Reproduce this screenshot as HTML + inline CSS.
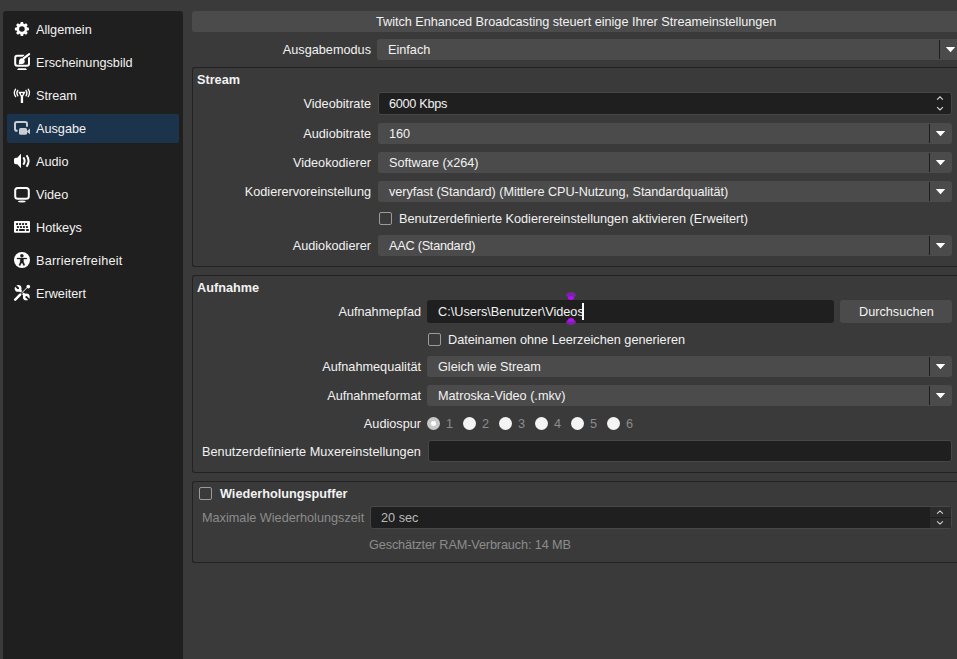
<!DOCTYPE html>
<html><head><meta charset="utf-8">
<style>
html,body{margin:0;padding:0;width:957px;height:659px;overflow:hidden;background:#3a3a3a;}
body{position:relative;font-family:"Liberation Sans",sans-serif;font-size:12.7px;color:#f2f2f2;}
.a{position:absolute;}
.t{position:absolute;white-space:nowrap;line-height:13px;margin-top:1px;}
.r{text-align:right;}
.side{left:3px;top:11px;width:180px;height:660px;background:#1f1f1f;border-radius:3px;}
.sel{left:7px;top:114px;width:172px;height:29px;background:#1b334b;border-radius:2px;}
.combo{background:#4b4b4b;border-radius:3px;height:21px;}
.combo .sep{position:absolute;top:1px;bottom:1px;width:1px;background:#1e1e1e;}
.combo .arr{position:absolute;width:0;height:0;border-left:5px solid transparent;border-right:5px solid transparent;border-top:5.5px solid #fff;}
.edit{background:#1f1f1f;border-radius:3px;}
.group{border:1px solid #222;border-radius:3px;border-right:none;}
.cb{width:11px;height:11px;border:1px solid #9b9b9b;border-radius:2px;}
.rad{width:13px;height:13px;border-radius:50%;background:#f4f4f4;}
.dis{color:#8c8c8c;}
b,.b{font-weight:bold;}
</style></head><body>
<!-- sidebar -->
<div class="a side"></div>
<div class="a sel"></div>
<svg class="a" style="left:0;top:0" width="183" height="320" viewBox="0 0 183 320">
<g fill="#fff">
<!-- gear -->
<path fill-rule="evenodd" d="M20.20,24.09 L20.73,22.00 L23.07,22.00 L23.60,24.09 L24.17,24.32 L26.02,23.22 L27.68,24.88 L26.58,26.73 L26.81,27.30 L28.90,27.83 L28.90,30.17 L26.81,30.70 L26.58,31.27 L27.68,33.12 L26.02,34.78 L24.17,33.68 L23.60,33.91 L23.07,36.00 L20.73,36.00 L20.20,33.91 L19.63,33.68 L17.78,34.78 L16.12,33.12 L17.22,31.27 L16.99,30.70 L14.90,30.17 L14.90,27.83 L16.99,27.30 L17.22,26.73 L16.12,24.88 L17.78,23.22 L19.63,24.32Z M24.7,29 A2.8,2.8 0 1 0 19.1,29 A2.8,2.8 0 1 0 24.7,29Z"/>
<!-- appearance -->
<path fill="none" stroke="#fff" stroke-width="2" d="M24.3,55.7 L17.2,55.7 Q15.2,55.7 15.2,57.7 L15.2,63.7 Q15.2,65.7 17.2,65.7 L27,65.7 Q29,65.7 29,63.7 L29,57.2"/>
<path d="M17,70 L18.2,68.2 L25.8,68.2 L27,70Z"/>
<path stroke="#1f1f1f" stroke-width="3.8" d="M23.2,58.8 L30.2,53.2"/><path stroke="#fff" stroke-width="2.1" stroke-linecap="round" d="M23.6,58.4 L29.2,54.1"/>
<path d="M18.8,64.2 L19.1,60.5 A2.9,2.9 0 1 1 22.2,64.1Z"/>
<!-- antenna -->
<path fill="none" stroke="#fff" stroke-width="1.3" stroke-linecap="round" d="M15.6,89.2 A6.5,6.5 0 0 0 15.6,96.6 M17.8,90.4 A4.6,4.6 0 0 0 17.8,95.8 M28.2,89.2 A6.5,6.5 0 0 1 28.2,96.6 M26,90.4 A4.6,4.6 0 0 1 26,95.8"/>
<path fill-rule="evenodd" d="M18.3,91.7 L25.6,91.7 L23.1,96.5 L23.1,103 L20.8,103 L20.8,96.5Z M22.9,93.9 A1,1 0 1 0 20.9,93.9 A1,1 0 1 0 22.9,93.9Z"/>
<!-- audio -->
<path d="M14,159.4 Q14,157.7 15.8,157.7 L17.3,157.7 L21,153.8 L21,168.2 L17.3,164.3 L15.8,164.3 Q14,164.3 14,162.6Z"/>
<path fill="none" stroke="#fff" stroke-width="2" d="M23.3,157.4 Q26,161 23.3,164.6 M26.6,155.3 Q30.6,161 26.6,166.7"/>
<!-- video -->
<rect x="15.2" y="188" width="13.6" height="10.8" rx="2.6" fill="none" stroke="#fff" stroke-width="2"/>
<ellipse cx="21.9" cy="201.5" rx="3.8" ry="0.9"/>
<!-- hotkeys -->
<rect x="14" y="221" width="16" height="11.8" rx="1"/>
<g fill="#1f1f1f">
<rect x="16.05" y="223.05" width="2.00" height="1.90" rx="0.4"/><rect x="19.05" y="223.05" width="2.00" height="1.90" rx="0.4"/><rect x="22.05" y="223.05" width="2.00" height="1.90" rx="0.4"/><rect x="25.05" y="223.05" width="2.00" height="1.90" rx="0.4"/>
<rect x="16.95" y="226.05" width="2.00" height="1.90" rx="0.4"/><rect x="19.95" y="226.05" width="2.00" height="1.90" rx="0.4"/><rect x="22.95" y="226.05" width="2.00" height="1.90" rx="0.4"/><rect x="25.95" y="226.05" width="2.00" height="1.90" rx="0.4"/>
<rect x="16.05" y="229.05" width="2.00" height="1.90" rx="0.4"/><rect x="19.05" y="229.05" width="5.80" height="1.90" rx="0.4"/><rect x="26.05" y="229.05" width="2.80" height="1.90" rx="0.4"/>
</g>
<!-- accessibility -->
<circle cx="22" cy="260" r="8"/>
<g fill="#1f1f1f">
<circle cx="21.9" cy="255.8" r="1.75"/>
<path stroke="#1f1f1f" stroke-width="0.3" stroke-linejoin="round" d="M17,258 L26.8,258 L26.8,259.1 L23.6,259.1 L23.6,262 L24.9,265.1 L23.7,265.7 L22.3,262.9 L21.5,262.9 L20.1,265.7 L18.9,265.1 L20.2,262 L20.2,259.1 L17,259.1Z"/>
</g>
<!-- tools -->
<path stroke="#fff" stroke-width="2.4" d="M18.4,288.6 L26,296.6"/>
<circle cx="18.1" cy="288.4" r="3.4"/><circle cx="26.3" cy="296.9" r="3.4"/>
<g fill="#1f1f1f"><path d="M18.76,287.62 L15.58,284.43 L14.23,285.78 L17.42,288.96Z"/><circle cx="18.09" cy="288.29" r="0.95"/><path d="M25.64,297.58 L28.82,300.77 L30.17,299.42 L26.98,296.24Z"/><circle cx="26.31" cy="296.91" r="0.95"/></g>
<path stroke="#1f1f1f" stroke-width="2.1" d="M20.2,294.5 L27.4,287.3"/>
<path stroke="#fff" stroke-width="0.95" d="M20.2,294.5 L27.4,287.3"/>
<path stroke="#1f1f1f" stroke-width="3.8" stroke-linecap="round" d="M15.2,299.6 L20.2,294.6"/>
<path stroke="#fff" stroke-width="2.5" stroke-linecap="round" d="M15.2,299.6 L20.2,294.6"/>
<circle cx="28.3" cy="286.6" r="1.85"/>
</g>
<!-- ausgabe (selected) -->
<g fill="#c9ced5">
<path fill="none" stroke="#c9ced5" stroke-width="2" d="M17.6,130.7 L16.8,130.7 Q15,130.7 15,128.9 L15,123.8 Q15,122 16.8,122 L25.2,122 Q27,122 27,123.8 L27,126.8"/>
<rect x="18" y="127" width="10" height="8.8" rx="2" fill="#1b334b"/><rect x="19" y="128" width="8" height="6.8" rx="1.6"/>
<path d="M26.4,131.4 L30,128.5 L30,134.3Z"/>
</g>
</svg>
<div class="t" style="left:36px;top:23px">Allgemein</div>
<div class="t" style="left:36px;top:56px">Erscheinungsbild</div>
<div class="t" style="left:36px;top:89px">Stream</div>
<div class="t" style="left:36px;top:122px">Ausgabe</div>
<div class="t" style="left:36px;top:155px">Audio</div>
<div class="t" style="left:36px;top:188px">Video</div>
<div class="t" style="left:36px;top:221px">Hotkeys</div>
<div class="t" style="left:36px;top:254px;letter-spacing:0.2px">Barrierefreiheit</div>
<div class="t" style="left:36px;top:287px">Erweitert</div>

<!-- banner -->
<div class="a" style="left:192px;top:11px;width:770px;height:21px;background:#4b4b4b;border-radius:3px"></div>
<div class="t" style="left:376px;top:15px;letter-spacing:-0.035px">Twitch Enhanced Broadcasting steuert einige Ihrer Streameinstellungen</div>

<!-- Ausgabemodus -->
<div class="t r" style="right:586px;top:43px">Ausgabemodus</div>
<div class="a combo" style="left:377px;top:39px;width:585px"><div class="sep" style="left:562px"></div></div>
<div class="t" style="left:388px;top:43px">Einfach</div>

<!-- Stream group -->
<div class="a group" style="left:192px;top:67px;width:800px;height:198px"></div>
<div class="t b" style="left:197px;top:73px">Stream</div>

<div class="t r" style="right:586px;top:97px">Videobitrate</div>
<div class="a edit" style="left:378px;top:92px;width:572px;height:21px;border:1px solid #474747"></div>
<div class="t" style="left:389px;top:97px;letter-spacing:-0.3px">6000 Kbps</div>

<div class="t r" style="right:586px;top:127px">Audiobitrate</div>
<div class="a combo" style="left:378px;top:123px;width:574px"><div class="sep" style="left:551px"></div></div>
<div class="t" style="left:389px;top:127px">160</div>

<div class="t r" style="right:586px;top:156px">Videokodierer</div>
<div class="a combo" style="left:378px;top:152px;width:574px"><div class="sep" style="left:551px"></div></div>
<div class="t" style="left:389px;top:156px">Software (x264)</div>

<div class="t r" style="right:586px;top:185px">Kodierervoreinstellung</div>
<div class="a combo" style="left:378px;top:181px;width:574px"><div class="sep" style="left:551px"></div></div>
<div class="t" style="left:389px;top:185px;letter-spacing:-0.06px">veryfast (Standard) (Mittlere CPU-Nutzung, Standardqualität)</div>

<div class="a cb" style="left:379px;top:212px"></div>
<div class="t" style="left:399px;top:212px">Benutzerdefinierte Kodierereinstellungen aktivieren (Erweitert)</div>

<div class="t r" style="right:586px;top:239px">Audiokodierer</div>
<div class="a combo" style="left:378px;top:235px;width:574px"><div class="sep" style="left:551px"></div></div>
<div class="t" style="left:389px;top:239px;letter-spacing:-0.24px">AAC (Standard)</div>

<!-- Aufnahme group -->
<div class="a group" style="left:192px;top:275px;width:800px;height:196px"></div>
<div class="t b" style="left:197px;top:281px">Aufnahme</div>

<div class="t r" style="right:536px;top:305px">Aufnahmepfad</div>
<div class="a edit" style="left:427px;top:300px;width:407px;height:23px"></div>
<div class="t" style="left:438px;top:305px">C:\Users\Benutzer\Videos</div>
<div class="a" style="left:582px;top:303px;width:2px;height:17px;background:#fff"></div>
<div class="a" style="left:566px;top:292px;width:10px;height:6px;border-radius:50%;background:#7b22a6"></div>
<div class="a" style="left:568px;top:295.5px;width:6px;height:4px;border-radius:50% 50% 45% 45%;background:#b010f0"></div>
<div class="a" style="left:566px;top:319px;width:10px;height:6px;border-radius:50%;background:#7b22a6"></div>
<div class="a" style="left:568px;top:318px;width:6px;height:4px;border-radius:45% 45% 50% 50%;background:#b010f0"></div>
<div class="a" style="left:840px;top:300px;width:112px;height:23px;background:#4b4b4b;border-radius:3px"></div>
<div class="t" style="left:859px;top:305px">Durchsuchen</div>

<div class="a cb" style="left:428px;top:333px"></div>
<div class="t" style="left:448px;top:333px">Dateinamen ohne Leerzeichen generieren</div>

<div class="t r" style="right:536px;top:360px">Aufnahmequalität</div>
<div class="a combo" style="left:427px;top:356px;width:525px"><div class="sep" style="left:502px"></div></div>
<div class="t" style="left:438px;top:360px">Gleich wie Stream</div>

<div class="t r" style="right:536px;top:389px">Aufnahmeformat</div>
<div class="a combo" style="left:427px;top:385px;width:525px"><div class="sep" style="left:502px"></div></div>
<div class="t" style="left:438px;top:389px">Matroska-Video (.mkv)</div>

<div class="t r" style="right:536px;top:417px">Audiospur</div>
<div class="a rad" style="left:427px;top:417px;background:#c8c8c8"></div>
<div class="a" style="left:431px;top:421px;width:5px;height:5px;border-radius:50%;background:#fff"></div>
<div class="t dis" style="left:446px;top:417px">1</div>
<div class="a rad" style="left:463px;top:417px"></div><div class="t dis" style="left:482px;top:417px">2</div>
<div class="a rad" style="left:499px;top:417px"></div><div class="t dis" style="left:518px;top:417px">3</div>
<div class="a rad" style="left:535px;top:417px"></div><div class="t dis" style="left:554px;top:417px">4</div>
<div class="a rad" style="left:571px;top:417px"></div><div class="t dis" style="left:590px;top:417px">5</div>
<div class="a rad" style="left:607px;top:417px"></div><div class="t dis" style="left:626px;top:417px">6</div>

<div class="t r" style="right:536px;top:445px;letter-spacing:0.07px">Benutzerdefinierte Muxereinstellungen</div>
<div class="a edit" style="left:428px;top:440px;width:522px;height:20px;border:1px solid #474747"></div>

<!-- Replay buffer group -->
<div class="a group" style="left:192px;top:481px;width:800px;height:80px"></div>
<div class="a cb" style="left:199px;top:487px"></div>
<div class="t b" style="left:220px;top:487px">Wiederholungspuffer</div>
<div class="t dis" style="left:202px;top:511px">Maximale Wiederholungszeit</div>
<div class="a edit" style="left:370px;top:506px;width:580px;height:21px;border:1px solid #474747"></div>
<div class="a" style="left:930px;top:507px;width:21px;height:10px;background:#2c2c2c"></div><div class="a" style="left:930px;top:517px;width:21px;height:1px;background:#1f1f1f"></div><div class="a" style="left:930px;top:518px;width:21px;height:10px;background:#2c2c2c"></div>
<div class="t" style="left:381px;top:511px;color:#b9b9b9">20 sec</div>
<div class="t dis" style="left:369px;top:538px;letter-spacing:-0.13px">Geschätzter RAM-Verbrauch: 14 MB</div>
<svg class="a" style="left:0;top:0;pointer-events:none" width="957" height="659"><g fill="#fff"><path d="M945.8,46.9 L955.2,46.9 L950.5,52.3Z"/><path d="M935.8,130.9 L945.2,130.9 L940.5,136.3Z"/><path d="M935.8,159.9 L945.2,159.9 L940.5,165.3Z"/><path d="M935.8,188.9 L945.2,188.9 L940.5,194.3Z"/><path d="M935.8,242.9 L945.2,242.9 L940.5,248.3Z"/><path d="M935.8,363.9 L945.2,363.9 L940.5,369.3Z"/><path d="M935.8,392.9 L945.2,392.9 L940.5,398.3Z"/></g><path fill="none" stroke="#dcdcdc" stroke-width="1.05" d="M937.1,99.6 L940.0,96.8 L942.9,99.6 M937.1,107.2 L940.0,110.0 L942.9,107.2 M937.1,513.7 L940.0,510.9 L942.9,513.7 M937.1,521.3 L940.0,524.1 L942.9,521.3"/></svg>
</body></html>
